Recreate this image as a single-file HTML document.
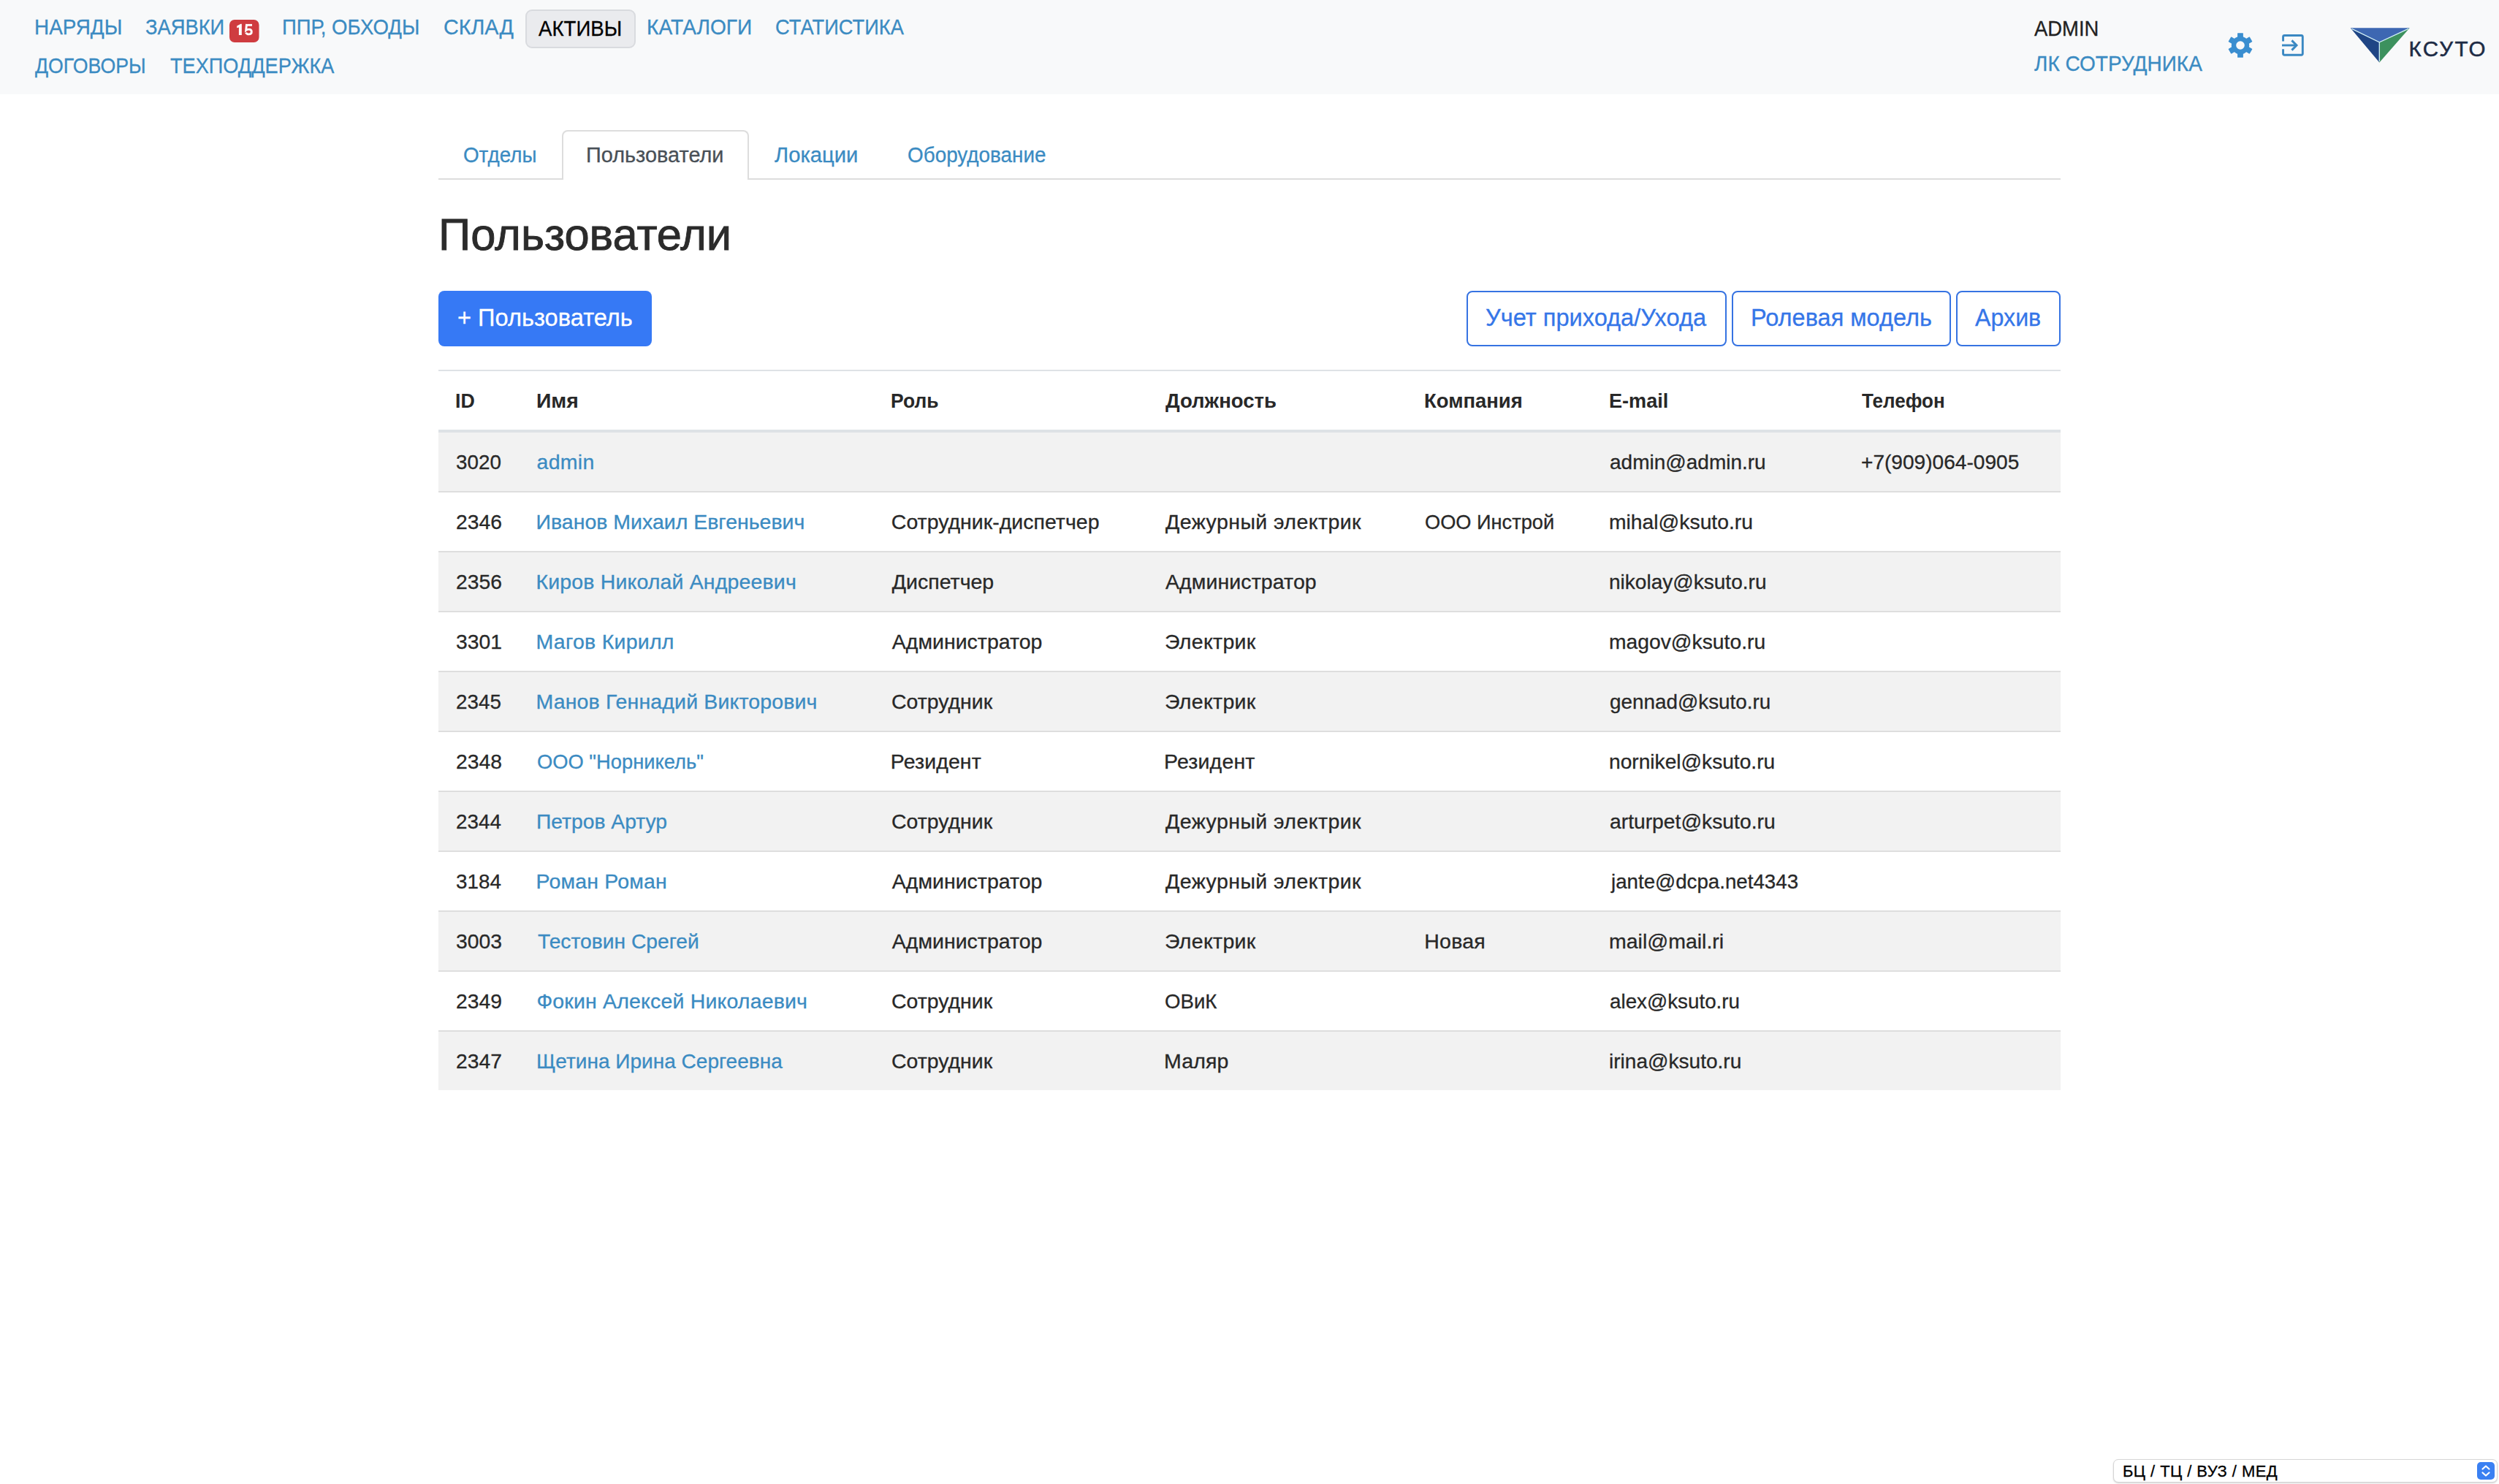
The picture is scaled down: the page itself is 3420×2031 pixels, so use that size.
<!DOCTYPE html>
<html lang="ru">
<head>
<meta charset="utf-8">
<title>Пользователи</title>
<style>
html,body{margin:0;padding:0;background:#fff;width:3420px;height:2031px;overflow:hidden;position:relative}
body{font-family:"Liberation Sans",sans-serif}
.t{position:absolute;white-space:nowrap;line-height:1;font-family:"Liberation Sans",sans-serif;-webkit-text-stroke:0.3px currentColor}
.abs{position:absolute;box-sizing:border-box}
.b{-webkit-text-stroke:0}
</style>
</head>
<body>
<!-- navbar -->
<div class="abs" style="left:0;top:0;width:3420px;height:129px;background:#f8f9fa"></div>
<div class="abs" style="left:719px;top:13px;width:151px;height:53px;background:#eaebee;border:2px solid #d9dbdf;border-radius:9px"></div>
<svg class="abs" style="left:314px;top:27px" width="41" height="31" viewBox="0 0 41 31">
  <rect x="0" y="0" width="40.5" height="31" rx="7" fill="#cf3c40"/>
  <polygon points="15.4,5.7 16.8,5.7 16.8,20.9 12.9,20.9 12.9,10.4 10.2,11.3 10.2,8.4" fill="#fff"/>
  <path d="M22.4 7.3 H31" stroke="#fff" stroke-width="2.8" fill="none"/>
  <path d="M23.5 6 L22.7 14.3 C23.6 13.5 25 13.1 26.6 13.1 C29 13.1 30.3 14.7 30.3 16.6 C30.3 18.6 28.9 19.9 26.6 19.9 C24.7 19.9 23.2 19 22.5 17.6" stroke="#fff" stroke-width="2.9" fill="none"/>
</svg>

<!-- gear icon -->
<svg class="abs" style="left:3048px;top:44px" width="36" height="36" viewBox="0 0 36 36">
  <g fill="#3a8ed0" transform="translate(18,18)">
    <circle r="12.2"/>
    <rect x="-3.9" y="-16.8" width="7.8" height="7" rx="0.6"/>
    <rect x="-3.9" y="-16.8" width="7.8" height="7" rx="0.6" transform="rotate(60)"/>
    <rect x="-3.9" y="-16.8" width="7.8" height="7" rx="0.6" transform="rotate(120)"/>
    <rect x="-3.9" y="-16.8" width="7.8" height="7" rx="0.6" transform="rotate(180)"/>
    <rect x="-3.9" y="-16.8" width="7.8" height="7" rx="0.6" transform="rotate(240)"/>
    <rect x="-3.9" y="-16.8" width="7.8" height="7" rx="0.6" transform="rotate(300)"/>
  </g>
  <circle cx="18" cy="18" r="5.8" fill="#f8f9fa"/>
</svg>
<!-- login icon -->
<svg class="abs" style="left:3120px;top:44px" width="36" height="36" viewBox="0 0 36 36">
  <path d="M4.55 12.5 V6.5 a2 2 0 0 1 2 -2 H29.3 a2 2 0 0 1 2 2 V29.25 a2 2 0 0 1 -2 2 H6.55 a2 2 0 0 1 -2 -2 V23.3" fill="none" stroke="#3a88c2" stroke-width="2.9"/>
  <path d="M3 18 H22" fill="none" stroke="#3a88c2" stroke-width="2.9"/>
  <path d="M16.4 11.4 L23 18 L16.4 24.6" fill="none" stroke="#3a88c2" stroke-width="2.9"/>
</svg>
<!-- logo -->
<svg class="abs" style="left:3214px;top:36px" width="88" height="52" viewBox="0 0 88 52">
  <polygon points="2.7,2.2 83.7,2.2 42.3,21.9" fill="#3d67b2"/>
  <polygon points="2.7,2.2 42.3,21.9 42.3,49.6" fill="#1f4585"/>
  <polygon points="83.7,2.2 42.3,21.9 42.3,49.6" fill="#3c915e"/>
  <path d="M4.5 3.4 L42.3 21.9 L82 3.4 M42.3 21.9 V48" fill="none" stroke="#cfeef5" stroke-width="1.3"/>
</svg>

<!-- tabs -->
<div class="abs" style="left:600px;top:244px;width:2220px;height:2px;background:#dddddd"></div>
<div class="abs" style="left:769px;top:178px;width:256px;height:68px;background:#fff;border:2px solid #dddddd;border-bottom:none;border-radius:8px 8px 0 0"></div>

<!-- buttons -->
<div class="abs" style="left:600px;top:398px;width:292px;height:76px;background:#3679f5;border-radius:8px"></div>
<div class="abs" style="left:2007px;top:398px;width:356px;height:76px;border:2px solid #3673e2;border-radius:8px"></div>
<div class="abs" style="left:2370px;top:398px;width:300px;height:76px;border:2px solid #3673e2;border-radius:8px"></div>
<div class="abs" style="left:2677px;top:398px;width:143px;height:76px;border:2px solid #3673e2;border-radius:8px"></div>

<!-- table -->
<div class="abs" style="left:600px;top:506px;width:2220px;height:2px;background:#dee2e6"></div>
<div class="abs" style="left:600px;top:588px;width:2220px;height:4px;background:#dee2e6"></div>
<div class="abs" style="left:600px;top:592px;width:2220px;height:80px;background:#f2f2f2"></div>
<div class="abs" style="left:600px;top:672px;width:2220px;height:2px;background:#dedede"></div>
<div class="abs" style="left:600px;top:754px;width:2220px;height:2px;background:#dedede"></div>
<div class="abs" style="left:600px;top:756px;width:2220px;height:80px;background:#f2f2f2"></div>
<div class="abs" style="left:600px;top:836px;width:2220px;height:2px;background:#dedede"></div>
<div class="abs" style="left:600px;top:918px;width:2220px;height:2px;background:#dedede"></div>
<div class="abs" style="left:600px;top:920px;width:2220px;height:80px;background:#f2f2f2"></div>
<div class="abs" style="left:600px;top:1000px;width:2220px;height:2px;background:#dedede"></div>
<div class="abs" style="left:600px;top:1082px;width:2220px;height:2px;background:#dedede"></div>
<div class="abs" style="left:600px;top:1084px;width:2220px;height:80px;background:#f2f2f2"></div>
<div class="abs" style="left:600px;top:1164px;width:2220px;height:2px;background:#dedede"></div>
<div class="abs" style="left:600px;top:1246px;width:2220px;height:2px;background:#dedede"></div>
<div class="abs" style="left:600px;top:1248px;width:2220px;height:80px;background:#f2f2f2"></div>
<div class="abs" style="left:600px;top:1328px;width:2220px;height:2px;background:#dedede"></div>
<div class="abs" style="left:600px;top:1410px;width:2220px;height:2px;background:#dedede"></div>
<div class="abs" style="left:600px;top:1412px;width:2220px;height:80px;background:#f2f2f2"></div>

<!-- select -->
<div class="abs" style="left:2892px;top:1997px;width:526px;height:32px;background:#fff;border:1px solid #d6d6d6;border-radius:7px;box-shadow:0 1px 2px rgba(0,0,0,.18)"></div>
<svg class="abs" style="left:3390px;top:2001px" width="24" height="24" viewBox="0 0 24 24">
  <rect x="0" y="0" width="24" height="24" rx="5" fill="#3a80f2"/>
  <path d="M7.5 9.5 L12 5.5 L16.5 9.5 M7.5 14.5 L12 18.5 L16.5 14.5" fill="none" stroke="#fff" stroke-width="2.2" stroke-linecap="round" stroke-linejoin="round"/>
</svg>

<div class="t" style="left:47.2px;top:22.0px;font-size:29.5px;color:#3b8bc2;transform:scaleX(0.9447);transform-origin:0 0">НАРЯДЫ</div>
<div class="t" style="left:198.8px;top:22.0px;font-size:29.5px;color:#3b8bc2;transform:scaleX(0.9263);transform-origin:0 0">ЗАЯВКИ</div>
<div class="t" style="left:386.2px;top:22.0px;font-size:29.5px;color:#3b8bc2;transform:scaleX(0.9338);transform-origin:0 0">ППР, ОБХОДЫ</div>
<div class="t" style="left:607.2px;top:22.0px;font-size:29.5px;color:#3b8bc2;transform:scaleX(0.9732);transform-origin:0 0">СКЛАД</div>
<div class="t" style="left:737.2px;top:25.0px;font-size:29px;color:#000;transform:scaleX(0.9534);transform-origin:0 0">АКТИВЫ</div>
<div class="t" style="left:885.0px;top:22.0px;font-size:29.5px;color:#3b8bc2;transform:scaleX(0.9531);transform-origin:0 0">КАТАЛОГИ</div>
<div class="t" style="left:1061.1px;top:22.0px;font-size:29.5px;color:#3b8bc2;transform:scaleX(0.9242);transform-origin:0 0">СТАТИСТИКА</div>
<div class="t" style="left:48.4px;top:74.5px;font-size:29.5px;color:#3b8bc2;transform:scaleX(0.9042);transform-origin:0 0">ДОГОВОРЫ</div>
<div class="t" style="left:233.3px;top:74.5px;font-size:29.5px;color:#3b8bc2;transform:scaleX(0.9201);transform-origin:0 0">ТЕХПОДДЕРЖКА</div>
<div class="t" style="left:2784.3px;top:24.9px;font-size:29px;color:#222;transform:scaleX(0.9462);transform-origin:0 0">ADMIN</div>
<div class="t" style="left:2784.0px;top:72.0px;font-size:29.5px;color:#3b8bc2;transform:scaleX(0.9492);transform-origin:0 0">ЛК СОТРУДНИКА</div>
<div class="t" style="left:3296.5px;top:51.6px;font-size:29.5px;color:#1d2b45;letter-spacing:2.32px;-webkit-text-stroke:0.5px #1d2b45">КСУТО</div>
<div class="t" style="left:634.1px;top:197.0px;font-size:29.5px;color:#3b8bc2;transform:scaleX(0.9423);transform-origin:0 0">Отделы</div>
<div class="t" style="left:802.0px;top:197.0px;font-size:29.5px;color:#495057;transform:scaleX(0.9788);transform-origin:0 0">Пользователи</div>
<div class="t" style="left:1059.6px;top:197.0px;font-size:29.5px;color:#3b8bc2;transform:scaleX(0.9895);transform-origin:0 0">Локации</div>
<div class="t" style="left:1242.1px;top:197.0px;font-size:29.5px;color:#3b8bc2;transform:scaleX(0.9447);transform-origin:0 0">Оборудование</div>
<div class="t" style="left:600.2px;top:290.0px;font-size:62px;color:#2b2b2b;transform:scaleX(0.9914);transform-origin:0 0;-webkit-text-stroke:0.9px #2b2b2b">Пользователи</div>
<div class="t" style="left:625.6px;top:418.4px;font-size:33.5px;color:#fff;transform:scaleX(0.9738);transform-origin:0 0">+ Пользователь</div>
<div class="t" style="left:2032.7px;top:417.8px;font-size:33.5px;color:#3576e8;transform:scaleX(0.9732);transform-origin:0 0">Учет прихода/Ухода</div>
<div class="t" style="left:2395.7px;top:417.8px;font-size:33.5px;color:#3576e8;transform:scaleX(0.9702);transform-origin:0 0">Ролевая модель</div>
<div class="t" style="left:2703.2px;top:417.8px;font-size:33.5px;color:#3576e8;transform:scaleX(0.9613);transform-origin:0 0">Архив</div>
<div class="t b" style="left:623.1px;top:534.0px;font-size:28.5px;color:#282828;font-weight:700;transform:scaleX(0.9385);transform-origin:0 0">ID</div>
<div class="t b" style="left:733.5px;top:534.0px;font-size:28.5px;color:#282828;font-weight:700;transform:scaleX(0.9945);transform-origin:0 0">Имя</div>
<div class="t b" style="left:1218.9px;top:534.0px;font-size:28.5px;color:#282828;font-weight:700;transform:scaleX(0.9279);transform-origin:0 0">Роль</div>
<div class="t b" style="left:1595.0px;top:534.0px;font-size:28.5px;color:#282828;font-weight:700;transform:scaleX(0.9667);transform-origin:0 0">Должность</div>
<div class="t b" style="left:1949.4px;top:534.0px;font-size:28.5px;color:#282828;font-weight:700;transform:scaleX(0.9625);transform-origin:0 0">Компания</div>
<div class="t b" style="left:2202.1px;top:534.0px;font-size:28.5px;color:#282828;font-weight:700;transform:scaleX(0.9512);transform-origin:0 0">E-mail</div>
<div class="t b" style="left:2548.0px;top:534.0px;font-size:28.5px;color:#282828;font-weight:700;transform:scaleX(0.9122);transform-origin:0 0">Телефон</div>
<div class="t" style="left:624.0px;top:617.5px;font-size:28.5px;color:#282828;transform:scaleX(0.9758);transform-origin:0 0">3020</div>
<div class="t" style="left:734.5px;top:617.5px;font-size:28.5px;color:#3b8bc2;letter-spacing:0.28px">admin</div>
<div class="t" style="left:2203.0px;top:617.5px;font-size:28.5px;color:#282828;transform:scaleX(0.9828);transform-origin:0 0">admin@admin.ru</div>
<div class="t" style="left:2547.0px;top:617.5px;font-size:28.5px;color:#282828;transform:scaleX(0.9853);transform-origin:0 0">+7(909)064-0905</div>
<div class="t" style="left:624.0px;top:699.5px;font-size:28.5px;color:#282828;transform:scaleX(0.9918);transform-origin:0 0">2346</div>
<div class="t" style="left:733.5px;top:699.5px;font-size:28.5px;color:#3b8bc2">Иванов Михаил Евгеньевич</div>
<div class="t" style="left:1219.8px;top:699.5px;font-size:28.5px;color:#282828">Сотрудник-диспетчер</div>
<div class="t" style="left:1595.0px;top:699.5px;font-size:28.5px;color:#282828;letter-spacing:0.44px">Дежурный электрик</div>
<div class="t" style="left:1950.3px;top:699.5px;font-size:28.5px;color:#282828;transform:scaleX(0.9546);transform-origin:0 0">ООО Инстрой</div>
<div class="t" style="left:2202.0px;top:699.5px;font-size:28.5px;color:#282828;transform:scaleX(0.9928);transform-origin:0 0">mihal@ksuto.ru</div>
<div class="t" style="left:624.0px;top:781.5px;font-size:28.5px;color:#282828;transform:scaleX(0.9918);transform-origin:0 0">2356</div>
<div class="t" style="left:733.5px;top:781.5px;font-size:28.5px;color:#3b8bc2;letter-spacing:0.15px">Киров Николай Андреевич</div>
<div class="t" style="left:1220.8px;top:781.5px;font-size:28.5px;color:#282828">Диспетчер</div>
<div class="t" style="left:1595.0px;top:781.5px;font-size:28.5px;color:#282828;letter-spacing:0.09px">Администратор</div>
<div class="t" style="left:2202.0px;top:781.5px;font-size:28.5px;color:#282828;transform:scaleX(0.9838);transform-origin:0 0">nikolay@ksuto.ru</div>
<div class="t" style="left:624.0px;top:863.5px;font-size:28.5px;color:#282828;transform:scaleX(0.9918);transform-origin:0 0">3301</div>
<div class="t" style="left:733.5px;top:863.5px;font-size:28.5px;color:#3b8bc2;letter-spacing:0.26px">Магов Кирилл</div>
<div class="t" style="left:1220.8px;top:863.5px;font-size:28.5px;color:#282828">Администратор</div>
<div class="t" style="left:1594.0px;top:863.5px;font-size:28.5px;color:#282828;letter-spacing:0.31px">Электрик</div>
<div class="t" style="left:2202.0px;top:863.5px;font-size:28.5px;color:#282828;transform:scaleX(0.9920);transform-origin:0 0">magov@ksuto.ru</div>
<div class="t" style="left:624.0px;top:945.5px;font-size:28.5px;color:#282828;transform:scaleX(0.9758);transform-origin:0 0">2345</div>
<div class="t" style="left:733.5px;top:945.5px;font-size:28.5px;color:#3b8bc2;letter-spacing:0.14px">Манов Геннадий Викторович</div>
<div class="t" style="left:1219.8px;top:945.5px;font-size:28.5px;color:#282828;transform:scaleX(0.9978);transform-origin:0 0">Сотрудник</div>
<div class="t" style="left:1594.0px;top:945.5px;font-size:28.5px;color:#282828;letter-spacing:0.31px">Электрик</div>
<div class="t" style="left:2203.0px;top:945.5px;font-size:28.5px;color:#282828;transform:scaleX(0.9776);transform-origin:0 0">gennad@ksuto.ru</div>
<div class="t" style="left:624.0px;top:1027.5px;font-size:28.5px;color:#282828;transform:scaleX(0.9918);transform-origin:0 0">2348</div>
<div class="t" style="left:734.5px;top:1027.5px;font-size:28.5px;color:#3b8bc2;transform:scaleX(0.9589);transform-origin:0 0">ООО &quot;Норникель&quot;</div>
<div class="t" style="left:1218.8px;top:1027.5px;font-size:28.5px;color:#282828;letter-spacing:0.10px">Резидент</div>
<div class="t" style="left:1593.0px;top:1027.5px;font-size:28.5px;color:#282828;letter-spacing:0.16px">Резидент</div>
<div class="t" style="left:2202.0px;top:1027.5px;font-size:28.5px;color:#282828;transform:scaleX(0.9872);transform-origin:0 0">nornikel@ksuto.ru</div>
<div class="t" style="left:624.0px;top:1109.5px;font-size:28.5px;color:#282828;transform:scaleX(0.9758);transform-origin:0 0">2344</div>
<div class="t" style="left:733.5px;top:1109.5px;font-size:28.5px;color:#3b8bc2;transform:scaleX(0.9916);transform-origin:0 0">Петров Артур</div>
<div class="t" style="left:1219.8px;top:1109.5px;font-size:28.5px;color:#282828;transform:scaleX(0.9978);transform-origin:0 0">Сотрудник</div>
<div class="t" style="left:1595.0px;top:1109.5px;font-size:28.5px;color:#282828;letter-spacing:0.44px">Дежурный электрик</div>
<div class="t" style="left:2203.0px;top:1109.5px;font-size:28.5px;color:#282828;transform:scaleX(0.9916);transform-origin:0 0">arturpet@ksuto.ru</div>
<div class="t" style="left:624.0px;top:1191.5px;font-size:28.5px;color:#282828;transform:scaleX(0.9758);transform-origin:0 0">3184</div>
<div class="t" style="left:733.5px;top:1191.5px;font-size:28.5px;color:#3b8bc2;letter-spacing:0.17px">Роман Роман</div>
<div class="t" style="left:1220.8px;top:1191.5px;font-size:28.5px;color:#282828">Администратор</div>
<div class="t" style="left:1595.0px;top:1191.5px;font-size:28.5px;color:#282828;letter-spacing:0.44px">Дежурный электрик</div>
<div class="t" style="left:2205.0px;top:1191.5px;font-size:28.5px;color:#282828;transform:scaleX(0.9719);transform-origin:0 0">jante@dcpa.net4343</div>
<div class="t" style="left:624.0px;top:1273.5px;font-size:28.5px;color:#282828;transform:scaleX(0.9918);transform-origin:0 0">3003</div>
<div class="t" style="left:735.5px;top:1273.5px;font-size:28.5px;color:#3b8bc2;transform:scaleX(0.9900);transform-origin:0 0">Тестовин Срегей</div>
<div class="t" style="left:1220.8px;top:1273.5px;font-size:28.5px;color:#282828">Администратор</div>
<div class="t" style="left:1594.0px;top:1273.5px;font-size:28.5px;color:#282828;letter-spacing:0.31px">Электрик</div>
<div class="t" style="left:1949.3px;top:1273.5px;font-size:28.5px;color:#282828;letter-spacing:0.23px">Новая</div>
<div class="t" style="left:2202.0px;top:1273.5px;font-size:28.5px;color:#282828">mail@mail.ri</div>
<div class="t" style="left:624.0px;top:1355.5px;font-size:28.5px;color:#282828;transform:scaleX(0.9918);transform-origin:0 0">2349</div>
<div class="t" style="left:734.5px;top:1355.5px;font-size:28.5px;color:#3b8bc2;letter-spacing:0.17px">Фокин Алексей Николаевич</div>
<div class="t" style="left:1219.8px;top:1355.5px;font-size:28.5px;color:#282828;transform:scaleX(0.9978);transform-origin:0 0">Сотрудник</div>
<div class="t" style="left:1594.0px;top:1355.5px;font-size:28.5px;color:#282828;transform:scaleX(0.9685);transform-origin:0 0">ОВиК</div>
<div class="t" style="left:2203.0px;top:1355.5px;font-size:28.5px;color:#282828;transform:scaleX(0.9750);transform-origin:0 0">alex@ksuto.ru</div>
<div class="t" style="left:624.0px;top:1437.5px;font-size:28.5px;color:#282828;transform:scaleX(0.9918);transform-origin:0 0">2347</div>
<div class="t" style="left:733.5px;top:1437.5px;font-size:28.5px;color:#3b8bc2;transform:scaleX(0.9836);transform-origin:0 0">Щетина Ирина Сергеевна</div>
<div class="t" style="left:1219.8px;top:1437.5px;font-size:28.5px;color:#282828;transform:scaleX(0.9978);transform-origin:0 0">Сотрудник</div>
<div class="t" style="left:1593.0px;top:1437.5px;font-size:28.5px;color:#282828;letter-spacing:0.15px">Маляр</div>
<div class="t" style="left:2202.0px;top:1437.5px;font-size:28.5px;color:#282828;transform:scaleX(0.9845);transform-origin:0 0">irina@ksuto.ru</div>
<div class="t" style="left:2905.0px;top:2002.7px;font-size:22px;color:#000;letter-spacing:0.42px">БЦ / ТЦ / ВУЗ / МЕД</div>
</body>
</html>
